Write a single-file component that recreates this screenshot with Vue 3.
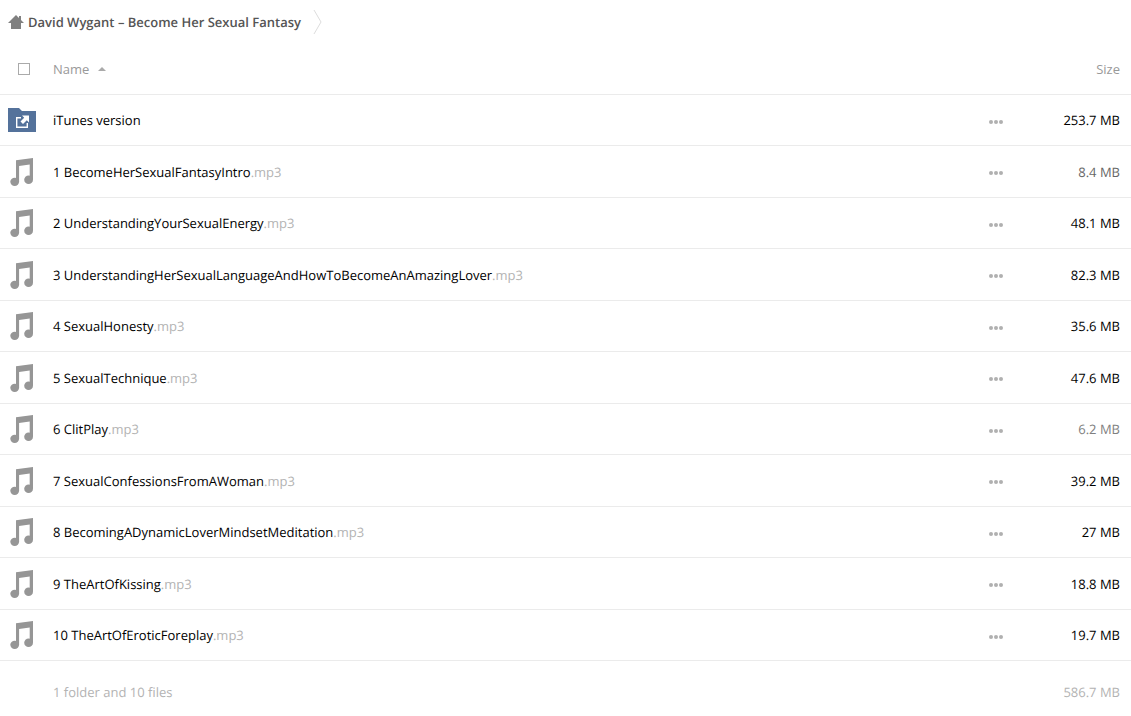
<script setup>
import { ref } from 'vue'

const allSelected = ref(false)

const rows = [
  { name: 'iTunes version', ext: '', size: '253.7 MB', folder: true },
  { name: '1 BecomeHerSexualFantasyIntro', ext: '.mp3', size: '8.4 MB', tone: 'medium' },
  { name: '2 UnderstandingYourSexualEnergy', ext: '.mp3', size: '48.1 MB' },
  { name: '3 UnderstandingHerSexualLanguageAndHowToBecomeAnAmazingLover', ext: '.mp3', size: '82.3 MB' },
  { name: '4 SexualHonesty', ext: '.mp3', size: '35.6 MB' },
  { name: '5 SexualTechnique', ext: '.mp3', size: '47.6 MB' },
  { name: '6 ClitPlay', ext: '.mp3', size: '6.2 MB', tone: 'light' },
  { name: '7 SexualConfessionsFromAWoman', ext: '.mp3', size: '39.2 MB' },
  { name: '8 BecomingADynamicLoverMindsetMeditation', ext: '.mp3', size: '27 MB' },
  { name: '9 TheArtOfKissing', ext: '.mp3', size: '18.8 MB' },
  { name: '10 TheArtOfEroticForeplay', ext: '.mp3', size: '19.7 MB' },
]
</script>

<template>
  <main class="files">
    <nav class="crumbs" aria-label="Breadcrumb">
      <a class="crumb" href="#">
        <svg class="home" viewBox="0 0 16 14" aria-hidden="true">
          <path d="M8 0 L11 3 V1 H13 V5 L16 8 H13 V14 H3 V8 H0 Z" />
        </svg>
        <span>David Wygant – Become Her Sexual Fantasy</span>
      </a>
      <svg class="separator" viewBox="0 0 10 26" aria-hidden="true">
        <path d="M1 1 L8 13 L1 25" />
      </svg>
    </nav>

    <table class="list">
      <thead>
        <tr>
          <th class="icon-cell">
            <input v-model="allSelected" class="tick" type="checkbox" aria-label="Select all" />
          </th>
          <th class="name-cell" aria-sort="ascending">
            <button class="sort" type="button">
              Name
              <svg class="caret" viewBox="0 0 8 4" aria-hidden="true"><path d="M0 4 L4 0 L8 4 Z" /></svg>
            </button>
          </th>
          <th class="menu-cell"></th>
          <th class="size-cell"><button class="sort" type="button">Size</button></th>
        </tr>
      </thead>
      <tbody>
        <tr v-for="row in rows" :key="row.name">
          <td class="icon-cell">
            <svg v-if="row.folder" class="folder" viewBox="0 0 28 24" aria-hidden="true">
              <path class="folder-body" d="M0 0 H11 L14 3 H28 V24 H0 Z" />
              <path class="folder-box" d="M13 9.700 H8.700 V19.300 H19.300 V15" />
              <path class="folder-arrow" d="M14 7.500 H21 V14.500 L18.800 12.300 L15 16 L12.500 13.500 L16.200 9.700 Z" />
            </svg>
            <svg v-else class="note" viewBox="0 0 24 28" aria-hidden="true">
              <path d="M6 2.200 L23 0 V21.700 H19.700 V6.400 L9.100 7.900 V23.800 H6 Z" />
              <ellipse cx="4.700" cy="23.800" rx="4.400" ry="4.100" />
              <ellipse cx="18.600" cy="21.800" rx="4.400" ry="4.300" />
            </svg>
          </td>
          <td class="name-cell">
            <a class="file-link" href="#">{{ row.name }}<span class="ext">{{ row.ext }}</span></a>
          </td>
          <td class="menu-cell">
            <button class="more" type="button" :aria-label="'Actions for ' + row.name">
              <svg viewBox="0 0 14 4" aria-hidden="true">
                <circle cx="2" cy="2" r="2" /><circle cx="7" cy="2" r="2" /><circle cx="12" cy="2" r="2" />
              </svg>
            </button>
          </td>
          <td class="size-cell" :class="row.tone">{{ row.size }}</td>
        </tr>
      </tbody>
      <tfoot>
        <tr>
          <td></td>
          <td class="name-cell">1 folder and 10 files</td>
          <td></td>
          <td class="size-cell">586.7 MB</td>
        </tr>
      </tfoot>
    </table>
  </main>
</template>

<style>
body {
  margin: 0;
  background: #fff;
}
</style>

<style scoped>
.files {
  font-family: "Open Sans", "Noto Sans", sans-serif;
  font-size: 13px;
  line-height: 20px;
  text-rendering: geometricPrecision;
  color: #000;
}

.crumbs {
  display: flex;
  align-items: center;
  gap: 12px;
  height: 44px;
  padding-left: 8px;
}

.crumb {
  display: flex;
  align-items: center;
  gap: 4px;
  color: #555;
  font-weight: 600;
  text-decoration: none;
}

.home {
  width: 16px;
  height: 14px;
  fill: #808080;
}

.separator {
  width: 10px;
  height: 26px;
  fill: none;
  stroke: #ddd;
}

.list {
  width: 100%;
  table-layout: fixed;
  border-collapse: separate;
  border-spacing: 0;
}

th,
td {
  box-sizing: border-box;
  height: 51px;
  padding: 0;
  border-bottom: 1px solid #ebebeb;
  font-weight: 400;
  text-align: left;
  vertical-align: middle;
}

tbody tr:nth-child(even) td {
  height: 52px;
}

.icon-cell {
  width: 53px;
}

th.icon-cell {
  padding-left: 18px;
}

td.icon-cell {
  padding-left: 8px;
}

.menu-cell {
  width: 42px;
}

.size-cell {
  width: 100px;
  padding-right: 11px;
  text-align: right;
}

.medium {
  color: #666;
}

.light {
  color: #808080;
}

.tick {
  display: block;
  box-sizing: border-box;
  width: 12px;
  height: 12px;
  margin: 0;
  appearance: none;
  border: 1px solid #aaa;
  background: #fff;
}

.tick:checked {
  background: #aaa;
}

.sort {
  display: inline-flex;
  align-items: center;
  gap: 9px;
  padding: 0;
  border: 0;
  background: none;
  color: #999;
  font: inherit;
  cursor: pointer;
}

.caret {
  width: 8px;
  height: 4px;
  fill: #aaa;
}

.folder,
.note {
  display: block;
}

.folder {
  width: 28px;
  height: 24px;
}

.folder-body {
  fill: #54729b;
}

.folder-box {
  fill: none;
  stroke: #fff;
  stroke-width: 1.4;
}

.folder-arrow {
  fill: #fff;
  stroke: #54729b;
  stroke-width: 1;
  paint-order: stroke;
}

.note {
  width: 24px;
  height: 28px;
  margin-left: 2px;
  fill: #969696;
}

.file-link {
  color: inherit;
  text-decoration: none;
}

.ext {
  color: #b3b3b3;
}

.more {
  display: block;
  padding: 3px 0 0;
  border: 0;
  background: none;
  cursor: pointer;
}

.more svg {
  display: block;
  width: 14px;
  height: 4px;
  fill: #b0b0b0;
}

tfoot td {
  height: 62px;
  border-bottom: 0;
  color: #b3b3b3;
}
</style>
